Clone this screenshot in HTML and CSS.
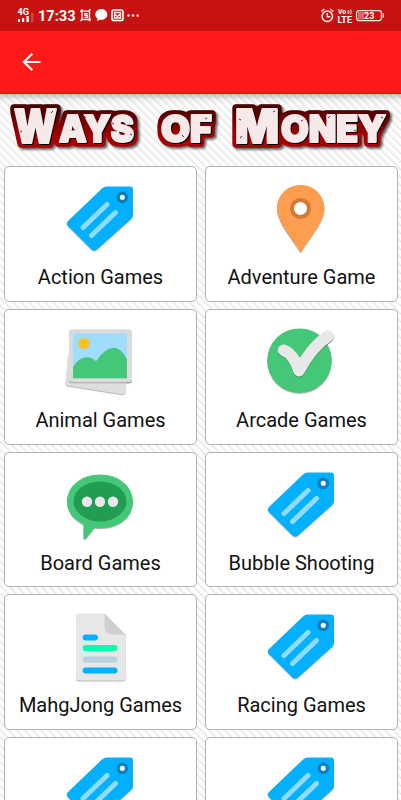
FILE: index.html
```html
<!DOCTYPE html>
<html lang="en">
<head>
<meta charset="utf-8">
<meta name="viewport" content="width=device-width, initial-scale=1">
<title>Ways of Money</title>
<link rel="stylesheet" href="styles.css">
</head>
<body>
<svg class="defs" aria-hidden="true">
  <symbol id="tag" viewBox="12 10 77 76">
    <path d="M57 16.500H80Q83 16.500 83 19.500V45Q83 47 81 49L47.500 79Q44 82 41 79L18 56Q15.500 53.500 18 51L52 18.500Q54 16.500 57 16.500Z" fill="#03b0ff"/>
    <path d="M57 34.500L33 57.500M65.500 42.500L41.500 65.500" stroke="#90dcff" stroke-width="5" stroke-linecap="round"/>
    <circle cx="72.300" cy="27.300" r="4.200" fill="#fff" stroke="#087fb8" stroke-width="3.300"/>
  </symbol>
</svg>
<div class="status">
  <svg class="status-left" width="150" height="31" viewBox="0 0 150 31">
    <g fill="#fff">
      <text x="17.500" y="15" class="net" textLength="11.500" lengthAdjust="spacingAndGlyphs">4G</text>
      <path d="M18 19h2v3h-2zM22 18h2.200v4H22zM26.500 16h2.300v6h-2.300z"/>
      <path d="M31 13h2.500v9H31z" opacity=".22"/>
      <text x="38" y="21" class="clock" textLength="37.500" lengthAdjust="spacingAndGlyphs">17:33</text>
      <path d="M101.300 9C97.700 9 95.300 11.500 95.300 14.600c0 1.800.9 3.200 2.300 4.200L97 21l3-1.200c4 .5 7.300-1.800 7.300-5.200C107.300 11.500 105 9 101.300 9z"/>
      <circle cx="128.500" cy="15.500" r="1.200"/><circle cx="133" cy="15.500" r="1.200"/><circle cx="137.700" cy="15.500" r="1.200"/>
    </g>
    <g fill="none" stroke="#fff" stroke-width="1.300">
      <path d="M80 11.200h9.500v10M82 9v10.500h9M88.500 11l2-1.800M80.300 21l2-1.800"/>
      <path d="M87.800 13.700h-3v1.700h2.700v1.900h-3.200"/>
      <rect x="112" y="10" width="11" height="10.500" rx="2" stroke-width="1.700"/>
      <path d="M114 12.500h7M114.500 14v4h6v-4l-3 2.500z"/>
    </g>
  </svg>
  <svg class="status-right" width="81" height="31" viewBox="320 0 81 31">
    <g fill="none" stroke="#ffe6e6" stroke-width="1.500">
      <circle cx="327.300" cy="16.300" r="5.200"/>
      <path d="M327.300 13v3.700h3M321.300 11.500l3-2.500M333.300 11.500l-3-2.500"/>
      <rect x="356.600" y="10.600" width="24.800" height="10" rx="2.500" stroke-width="1.200"/>
      <path d="M348.500 10.500q-1.500 1.700 0 3.500q1.500-1.700 0-3.500M350.600 9.500q1.500 2.500 0 4.800" stroke-width=".9"/>
    </g>
    <path d="M358 12h6v7.500h-6z" fill="#e66565"/>
    <path d="M382.500 13.500h1.500v4h-1.500z" fill="#ffe6e6"/>
    <g fill="#fff">
      <text x="338" y="14" class="vo">Vo</text>
      <text x="337.500" y="22.500" class="lte" textLength="14.500" lengthAdjust="spacingAndGlyphs">LTE</text>
      <text x="364" y="19" class="battery">23</text>
    </g>
  </svg>
</div>
<header class="bar">
  <svg width="20" height="20" viewBox="0 0 20 20" fill="none" stroke="#fff" stroke-width="2.100"><path d="M18.500 10H2M10.300 1.700L2 10l8.300 8.300"/></svg>
</header>
<main class="page">
  <svg class="logo" width="401" height="72" viewBox="0 94 401 72">
    <defs>
      <filter id="blood" filterUnits="userSpaceOnUse" x="0" y="94" width="401" height="72" color-interpolation-filters="sRGB">
        <feMorphology in="SourceAlpha" operator="dilate" radius="3"/>
        <feGaussianBlur stdDeviation="1.500"/>
        <feComponentTransfer result="shape"><feFuncA type="linear" slope="5" intercept="-1"/></feComponentTransfer>
        <feFlood flood-color="#a80004" result="low"/>
        <feFlood y="94" height="36" flood-color="#7c0000" result="mid"/>
        <feFlood y="94" height="22" flood-color="#480000" result="high"/>
        <feMerge><feMergeNode in="low"/><feMergeNode in="mid"/><feMergeNode in="high"/></feMerge>
        <feGaussianBlur stdDeviation="0 6"/>
        <feComposite in2="shape" operator="in" result="edge"/>
        <feGaussianBlur in="shape" stdDeviation="1.300"/>
        <feOffset dx="2" dy="2"/>
        <feComponentTransfer result="shadow"><feFuncA type="linear" slope=".6"/></feComponentTransfer>
        <feGaussianBlur in="SourceAlpha" stdDeviation=".7"/>
        <feOffset dx=".6" dy=".7" result="inner"/>
        <feMerge><feMergeNode in="shadow"/><feMergeNode in="edge"/><feMergeNode in="inner"/><feMergeNode in="SourceGraphic"/></feMerge>
      </filter>
    </defs>
    <g class="letters" filter="url(#blood)">
      <text x="14" y="142.500" class="cap" textLength="43" lengthAdjust="spacingAndGlyphs">W</text>
      <text x="59" y="141.500" textLength="75" lengthAdjust="spacingAndGlyphs">AYS</text>
      <text x="161" y="141.500" textLength="51" lengthAdjust="spacingAndGlyphs">OF</text>
      <text x="235" y="142.500" class="cap" textLength="44" lengthAdjust="spacingAndGlyphs">M</text>
      <text x="281" y="141.500" textLength="105" lengthAdjust="spacingAndGlyphs">ONEY</text>
    </g>
    <path d="M20 132l2-1M53 111l-2 2M75 130l-2-1M84 116l2 2M114 124l-2-1M132 135l-2-1M184 137l-2-2M207 118l-2 1M239 119l2 1M275 111l-2 1M240 138l2-2M303 120l-2 1M330 116l-2 2M356 131l-2-1M383 117l-2 1" stroke="#4d1717" stroke-width=".9"/>
  </svg>
  <div class="grid">
    <a class="card"><svg class="icon"><use href="#tag"/></svg><span>Action Games</span></a>
    <a class="card"><svg class="icon" viewBox="13 10 77 76">
      <path d="M50.700 15C37 15 27 25.500 27 38.500C27 51 39 65 50.700 82.500C62 65 74.500 51 74.500 38.500C74.500 25.500 64 15 50.700 15Z" fill="#fd9d50"/>
      <circle cx="50.500" cy="38.500" r="8.500" fill="#fff" stroke="#cf7b36" stroke-width="4"/></svg><span>Adventure Game</span></a>
    <a class="card"><svg class="icon" viewBox="12 7.800 77 76">
      <path d="M18 40L15.500 67Q15 70 18 70.500L72 79Q75 79.500 75.500 76L77 60Z" fill="#dedede"/>
      <rect class="tick" x="19" y="14" width="63" height="53" rx="3" fill="#dbdbdb"/>
      <path d="M23 18h54v45H23z" fill="#a0dcfb"/><circle cx="34" cy="28.300" r="5.500" fill="#fcc21b"/>
      <path d="M23 52Q29 42 36 42Q42 42 46 46Q55 32.500 64 32.500Q71 32.500 77 44.500V63H23Z" fill="#45c778"/></svg><span>Animal Games</span></a>
    <a class="card"><svg class="icon" viewBox="13 7.800 77 76">
      <circle cx="49.500" cy="45.500" r="32.300" fill="#45c778"/>
      <path class="tick" d="M33.500 35C40 37.500 45.500 44.500 49 55.500C57 41 67 28 78 21" fill="none" stroke="#e8e8e8" stroke-width="11.500" stroke-linecap="round" stroke-linejoin="round"/></svg><span>Arcade Games</span></a>
    <a class="card"><svg class="icon" viewBox="12 5.600 77 76">
      <path d="M50 14C31 14 17 26 17 41C17 51 23 59 33.500 64V77Q33.500 80 36 78L44.500 67.500C67 70 83 58 83 41C83 26 69 14 50 14Z" fill="#45c778"/>
      <ellipse cx="50" cy="41" rx="26.500" ry="20" fill="#209c53"/>
      <g fill="#e8e8e8"><circle cx="37" cy="41.300" r="5.200"/><circle cx="50" cy="41.300" r="5.200"/><circle cx="63" cy="41.300" r="5.200"/></g></svg><span>Board Games</span></a>
    <a class="card"><svg class="icon"><use href="#tag"/></svg><span>Bubble Shooting</span></a>
    <a class="card"><svg class="icon" viewBox="12 3.400 77 76">
      <path d="M29 9H54.500L75.500 30V73Q75.500 76 72.500 76H29Q26 76 26 73V12Q26 9 29 9Z" fill="#e7e7e7"/>
      <path d="M54.500 9V22Q54.500 30 62.500 30H75.500Z" fill="#cfcfcf"/>
      <g fill="none" stroke-width="6" stroke-linecap="round"><path d="M35.700 32.800H45" stroke="#03b0ff"/><path d="M35.700 43.500H64.500" stroke="#00ffb0"/><path d="M35.700 55H64.500" stroke="#b9d2e0"/><path d="M35.700 66H64.500" stroke="#03b0ff"/></g></svg><span>MahgJong Games</span></a>
    <a class="card"><svg class="icon"><use href="#tag"/></svg><span>Racing Games</span></a>
    <a class="card"><svg class="icon"><use href="#tag"/></svg></a>
    <a class="card"><svg class="icon"><use href="#tag"/></svg></a>
  </div>
</main>
</body>
</html>
```
FILE: styles.css
```css
* { box-sizing: border-box; }
html, body { height: 100%; }
body {
  margin: 0;
  height: 800px;
  display: flex;
  flex-direction: column;
  overflow: hidden;
  font-family: Roboto, sans-serif;
  background: #fff;
}
.defs { position: absolute; width: 0; height: 0; }
.status {
  flex: none;
  height: 31px;
  display: flex;
  justify-content: space-between;
  background: #c81212;
}
.net { font: 700 9px Roboto, sans-serif; }
.clock { font: 700 14.500px Roboto, sans-serif; }
.vo { font: 700 6.800px Roboto, sans-serif; }
.lte { font: 700 8.500px Roboto, sans-serif; }
.battery { font: 700 9px Roboto, sans-serif; }
.bar {
  flex: none;
  height: 63px;
  padding-left: 22px;
  display: flex;
  align-items: center;
  background: #ff1a1a;
  border-bottom: 1px solid #ff0000;
}
.page {
  flex: 1;
  min-height: 0;
  overflow: hidden;
  background:
    linear-gradient(rgba(0, 0, 0, .24), rgba(0, 0, 0, .06) 5px, transparent 11px),
    repeating-linear-gradient(45deg, #fdfdfd 0 3.500px, #e8e8e8 4.300px 5px, #fdfdfd 5.660px);
}
.logo { display: block; }
.letters {
  font: 900 37px Inter, sans-serif;
  fill: #f5e9e9;
  stroke: #f5e9e9;
  stroke-width: 2px;
  stroke-linejoin: round;
}
.letters .cap { font-size: 47px; }
.grid {
  display: grid;
  grid-template-columns: 193px 193px;
  grid-auto-rows: 135.800px;
  gap: 7px 8px;
  padding-left: 4px;
}
.card {
  display: flex;
  flex-direction: column;
  align-items: center;
  padding-top: 13px;
  background: #fff;
  border: 1px solid #b5b0b1;
  border-radius: 5px;
  color: #111;
  font-size: 20px;
  line-height: 24px;
  white-space: nowrap;
}
.icon {
  flex: none;
  width: 77px;
  height: 76px;
  margin-bottom: 9px;
  filter: drop-shadow(.7px 1px .7px rgba(0, 0, 0, .28));
}
.tick { filter: drop-shadow(.5px 1px .5px rgba(0, 0, 0, .25)); }
```
